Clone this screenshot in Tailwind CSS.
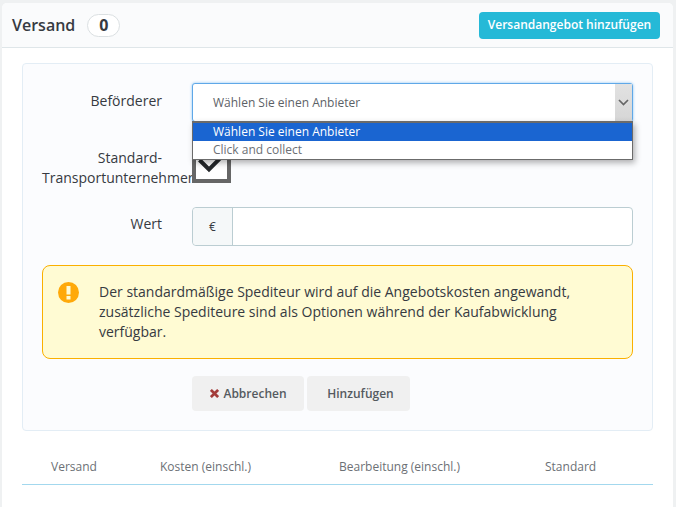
<!DOCTYPE html>
<html lang="de">
<head>
    <meta charset="UTF-8">
    <title>Versand</title>
    <script src="https://cdn.jsdelivr.net/npm/@tailwindcss/browser@4"></script>
</head>
<body class="bg-[#eff1f2] font-['Open_Sans',sans-serif] text-[#363a41] h-[507px] overflow-hidden">
    <div class="ml-[2px] mr-[3px] pt-[3px] h-[507px]">
        <div class="bg-white rounded-t-[5px] h-[504px] overflow-hidden">
            <!-- Header -->
            <div class="flex items-center justify-between h-[45px] pl-[10px] pr-[13px] bg-[#fafbfc] border-b border-[#dfe6e9]">
                <div class="flex items-center gap-[12px]">
                    <h2 class="text-[16px] font-semibold text-[#363a41]">Versand</h2>
                    <span class="flex items-center justify-center w-[33px] h-[23px] rounded-full border border-[#dbe0e2] bg-white text-[16px] font-bold">0</span>
                </div>
                <button class="h-[27px] w-[181px] rounded-[4px] bg-[#25b9d7] text-white text-[12px] font-semibold">Versandangebot hinzufügen</button>
            </div>

            <div class="px-[20px] pt-[15px]">
                <!-- Form panel -->
                <div class="h-[368px] px-[19px] pt-[19px] bg-[#fbfcfe] border border-[#e3edf5] rounded-[4px]">
                    <div class="flex gap-[30px] h-[61px]">
                        <label class="w-[120px] pt-[8px] text-right text-[14px] leading-[20px]">Beförderer</label>
                        <div class="relative w-[441px]">
                            <div class="flex items-stretch h-[39px] bg-white border border-[#5fa8e8] rounded-[3px] shadow-[0_0_3px_#8cc4f2]">
                                <span class="flex-1 pl-[20px] pt-[10px] text-[12px] leading-[17px] text-[#5c6166]">Wählen Sie einen Anbieter</span>
                                <span class="flex items-center justify-center w-[17px] bg-gradient-to-b from-[#e2e2e2] to-[#d6d6d6]">
                                    <svg width="11" height="7" viewBox="0 0 11 7" fill="none" stroke="#666" stroke-width="1.7"><path d="M1 1l4.500 4.500L10 1"/></svg>
                                </span>
                            </div>
                            <!-- Open dropdown -->
                            <ul class="absolute z-10 left-0 top-[38px] w-[441px] bg-white border border-[#6b6b6b] border-t-2 shadow-[2px_3px_6px_rgba(0,0,0,0.3)] text-[12px] leading-[18px]">
                                <li class="pl-[20px] bg-[#1a65d1] text-white">Wählen Sie einen Anbieter</li>
                                <li class="pl-[20px] text-[#6c7075]">Click and collect</li>
                            </ul>
                        </div>
                    </div>

                    <div class="flex gap-[30px] h-[63px]">
                        <label class="w-[120px] pt-[4px] text-right text-[14px] leading-[20px]">Standard-Transportunternehmer</label>
                        <div class="flex justify-center w-[39px] h-[39px] border-[4px] border-[#666] bg-white">
                            <svg width="28" height="26" viewBox="0 0 28 26" fill="none" stroke="#24272a" stroke-width="4"><path d="M1.500 12l9.500 9.500L27 5.500"/></svg>
                        </div>
                    </div>

                    <div class="flex gap-[30px] h-[58px]">
                        <label class="w-[120px] pt-[7px] text-right text-[14px] leading-[20px]">Wert</label>
                        <div class="flex w-[441px] h-[39px] bg-white border border-[#bbcdd2] rounded-[4px]">
                            <span class="flex items-center justify-center w-[40px] bg-[#f5f8f9] border-r border-[#bbcdd2] rounded-l-[4px] text-[12px]">€</span>
                        </div>
                    </div>

                    <!-- Warning -->
                    <div class="flex w-[591px] h-[94px] pl-[15px] pr-[30px] pt-[16px] bg-[#fffbd3] border border-[#fab000] rounded-[8px]">
                        <svg class="shrink-0" width="21" height="21" viewBox="0 0 21 21"><circle cx="10.500" cy="10.500" r="10.500" fill="#ffa90a"/><rect x="8.500" y="4" width="4" height="8.500" fill="#fffbd3"/><rect x="8.500" y="14" width="4" height="3.500" fill="#fffbd3"/></svg>
                        <p class="ml-[20px] text-[14px] leading-[20px] text-[#363a41]">Der standardmäßige Spediteur wird auf die Angebotskosten angewandt, zusätzliche Spediteure sind als Optionen während der Kaufabwicklung verfügbar.</p>
                    </div>

                    <!-- Buttons -->
                    <div class="flex gap-[3px] ml-[150px] mt-[17px]">
                        <button class="flex items-center justify-center gap-[4px] w-[112px] h-[35px] pl-[1px] bg-[#f0f0f0] rounded-[4px] text-[12px] font-semibold text-[#555a5f]">
                            <svg width="9" height="9" viewBox="0 0 10 10" stroke="#a33c3a" stroke-width="3"><path d="M1 1l8 8M9 1l-8 8"/></svg>
                            Abbrechen
                        </button>
                        <button class="w-[103px] h-[35px] pl-[4px] bg-[#f0f0f0] rounded-[4px] text-[12px] font-semibold text-[#555a5f]">Hinzufügen</button>
                    </div>
                </div>

                <!-- Table head -->
                <div class="flex h-[54px] pt-[27px] border-b border-[#a3d8ee] text-[12px] leading-[17px] text-[#6c7075]">
                    <span class="w-[138px] pl-[29px]">Versand</span>
                    <span class="w-[179px]">Kosten (einschl.)</span>
                    <span class="w-[206px]">Bearbeitung (einschl.)</span>
                    <span>Standard</span>
                </div>
            </div>
        </div>
    </div>
</body>
</html>
